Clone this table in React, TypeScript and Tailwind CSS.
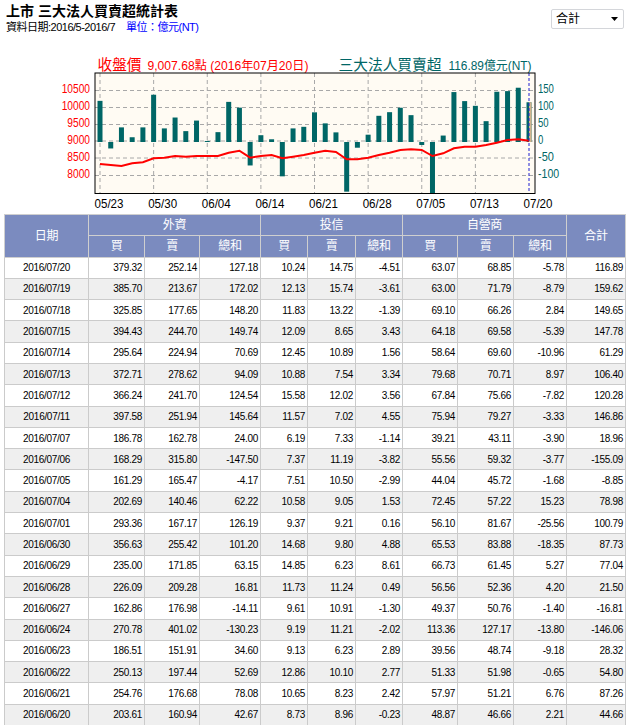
import React from "react"

// 三大法人買賣超統計表：上方為走勢圖，下方為逐日明細
const ROWS: string[][] = [
  ["2016/07/20", "379.32", "252.14", "127.18", "10.24", "14.75", "-4.51", "63.07", "68.85", "-5.78", "116.89"],
  ["2016/07/19", "385.70", "213.67", "172.02", "12.13", "15.74", "-3.61", "63.00", "71.79", "-8.79", "159.62"],
  ["2016/07/18", "325.85", "177.65", "148.20", "11.83", "13.22", "-1.39", "69.10", "66.26", "2.84", "149.65"],
  ["2016/07/15", "394.43", "244.70", "149.74", "12.09", "8.65", "3.43", "64.18", "69.58", "-5.39", "147.78"],
  ["2016/07/14", "295.64", "224.94", "70.69", "12.45", "10.89", "1.56", "58.64", "69.60", "-10.96", "61.29"],
  ["2016/07/13", "372.71", "278.62", "94.09", "10.88", "7.54", "3.34", "79.68", "70.71", "8.97", "106.40"],
  ["2016/07/12", "366.24", "241.70", "124.54", "15.58", "12.02", "3.56", "67.84", "75.66", "-7.82", "120.28"],
  ["2016/07/11", "397.58", "251.94", "145.64", "11.57", "7.02", "4.55", "75.94", "79.27", "-3.33", "146.86"],
  ["2016/07/07", "186.78", "162.78", "24.00", "6.19", "7.33", "-1.14", "39.21", "43.11", "-3.90", "18.96"],
  ["2016/07/06", "168.29", "315.80", "-147.50", "7.37", "11.19", "-3.82", "55.56", "59.32", "-3.77", "-155.09"],
  ["2016/07/05", "161.29", "165.47", "-4.17", "7.51", "10.50", "-2.99", "44.04", "45.72", "-1.68", "-8.85"],
  ["2016/07/04", "202.69", "140.46", "62.22", "10.58", "9.05", "1.53", "72.45", "57.22", "15.23", "78.98"],
  ["2016/07/01", "293.36", "167.17", "126.19", "9.37", "9.21", "0.16", "56.10", "81.67", "-25.56", "100.79"],
  ["2016/06/30", "356.63", "255.42", "101.20", "14.68", "9.80", "4.88", "65.53", "83.88", "-18.35", "87.73"],
  ["2016/06/29", "235.00", "171.85", "63.15", "14.85", "6.23", "8.61", "66.73", "61.45", "5.27", "77.04"],
  ["2016/06/28", "226.09", "209.28", "16.81", "11.73", "11.24", "0.49", "56.56", "52.36", "4.20", "21.50"],
  ["2016/06/27", "162.86", "176.98", "-14.11", "9.61", "10.91", "-1.30", "49.37", "50.76", "-1.40", "-16.81"],
  ["2016/06/24", "270.78", "401.02", "-130.23", "9.19", "11.21", "-2.02", "113.36", "127.17", "-13.80", "-146.06"],
  ["2016/06/23", "186.51", "151.91", "34.60", "9.13", "6.23", "2.89", "39.56", "48.74", "-9.18", "28.32"],
  ["2016/06/22", "250.13", "197.44", "52.69", "12.86", "10.10", "2.77", "51.33", "51.98", "-0.65", "54.80"],
  ["2016/06/21", "254.76", "176.68", "78.08", "10.65", "8.23", "2.42", "57.97", "51.21", "6.76", "87.26"],
  ["2016/06/20", "203.61", "160.94", "42.67", "8.73", "8.96", "-0.23", "48.87", "46.66", "2.21", "44.66"],
]

// 05/23 ~ 06/17 由圖估計，之後取自表格合計
const EARLY = [121, -19, 43, 14, 43, 139, 40, 72, 32, 63, 3, 29, 118, 101, -69, 20, 8, -101, 40]
const BARS = [...EARLY, ...ROWS.map((r) => parseFloat(r[10])).reverse()]

const LINE_Y = [
  164, 165, 166, 163.3, 162.3, 158.3, 157.7, 156, 156.7, 156, 156, 156, 152.7, 150.7, 157.7, 156, 155, 158.3,
  156.7, 155, 152.7, 150.7, 152, 159.3, 159.3, 157.7, 155, 152.7, 150, 149.3, 150, 156, 153.3, 148.3, 146.7,
  146.7, 145, 142.7, 140, 139.3, 140.7,
]

const X0 = 100
const STEP = 10.725
const ZERO = 142
const K = 0.34
const LEFT = 95
const RIGHT = 535
const TOP = 73
const BOTTOM = 193.5

const GRID_Y = [90.5, 107.5, 124.5, 141, 158, 175.5]
const LABEL_Y = [92.5, 109.5, 126.5, 143.5, 160.5, 177.5]
const LEFT_LABELS = ["10500", "10000", "9500", "9000", "8500", "8000"]
const RIGHT_LABELS = ["150", "100", "50", "0", "-50", "-100"]
const DATES = ["05/23", "05/30", "06/04", "06/14", "06/21", "06/28", "07/05", "07/13", "07/20"]

const FONT = "'Liberation Sans','Noto Sans CJK TC',sans-serif"

function Chart() {
  const xAt = (i: number) => X0 + i * STEP
  return (
    <svg width={633} height={178} viewBox="0 36 633 178" className="block" style={{ fontFamily: FONT }}>
      <text x={97.5} y={69.5} fill="#ff0000" fontSize={15} textLength={44} lengthAdjust="spacingAndGlyphs">
        收盤價
      </text>
      <text x={147.5} y={69.5} fill="#ff0000" fontSize={12} textLength={161} lengthAdjust="spacingAndGlyphs">
        9,007.68點 (2016年07月20日)
      </text>
      <text x={338.5} y={69.5} fill="#006666" fontSize={15} textLength={103} lengthAdjust="spacingAndGlyphs">
        三大法人買賣超
      </text>
      <text x={448.5} y={69.5} fill="#006666" fontSize={12} textLength={83} lengthAdjust="spacingAndGlyphs">
        116.89億元(NT)
      </text>

      <rect x={LEFT} y={TOP} width={RIGHT - LEFT} height={BOTTOM - TOP} fill="#fffbf3" />
      <defs>
        <clipPath id="plot">
          <rect x={LEFT} y={TOP} width={RIGHT - LEFT} height={BOTTOM - TOP} />
        </clipPath>
      </defs>

      {GRID_Y.map((y) => (
        <line key={y} x1={LEFT} x2={RIGHT} y1={y} y2={y} stroke="#a8a8a8" strokeDasharray="4 3" />
      ))}
      {DATES.slice(0, 8).map((d, n) => (
        <line key={d} x1={xAt(n * 5)} x2={xAt(n * 5)} y1={TOP} y2={BOTTOM} stroke="#a8a8a8" strokeDasharray="4 3" />
      ))}

      <g clipPath="url(#plot)">
        {BARS.map((v, i) => {
          const h = Math.abs(v) * K
          const y = v >= 0 ? ZERO - h : ZERO
          return <rect key={i} x={xAt(i) - 2.5} y={y} width={5} height={h} fill="#006666" />
        })}
        <rect x={xAt(40)} y={ZERO - 116.89 * K} width={2.5} height={116.89 * K} fill="#d2b48c" />
        <polyline
          points={LINE_Y.map((y, i) => `${xAt(i)},${y}`).join(" ")}
          fill="none"
          stroke="#ff0000"
          strokeWidth={2}
        />
      </g>
      <line x1={529} x2={529} y1={TOP} y2={BOTTOM} stroke="#2020d0" strokeDasharray="3 2" />

      <rect x={LEFT} y={TOP} width={RIGHT - LEFT} height={BOTTOM - TOP} fill="none" stroke="#000" />

      {LEFT_LABELS.map((t, n) => (
        <text
          key={t}
          x={90}
          y={LABEL_Y[n]}
          fill="#ff0000"
          fontSize={13}
          textAnchor="end"
          textLength={t.length * 5.67}
          lengthAdjust="spacingAndGlyphs"
        >
          {t}
        </text>
      ))}
      {RIGHT_LABELS.map((t, n) => (
        <text
          key={t}
          x={538}
          y={LABEL_Y[n]}
          fill="#006666"
          fontSize={13}
          textLength={t.length * 5.3}
          lengthAdjust="spacingAndGlyphs"
        >
          {t}
        </text>
      ))}
      {DATES.map((d, n) => (
        <text key={d} x={xAt(n * 5) - 5.5} y={208} fill="#000" fontSize={13} textLength={29} lengthAdjust="spacingAndGlyphs">
          {d}
        </text>
      ))}
    </svg>
  )
}

const COLS = [84, 56, 55, 61, 47, 48, 47, 55, 56, 53, 59]

export default function App() {
  const th = "border border-[#cfcfcf] bg-[#7b8bbf] text-white font-normal text-[12px] p-0"
  const td = "border border-[#cbcbcb] p-0 pr-[2px] text-right"
  return (
    <div className="w-[633px] bg-white text-black font-['Liberation_Sans','Noto_Sans_CJK_TC',sans-serif]">
      <div className="flex h-[36px] justify-between">
        <div className="pl-[6px] pt-[4px]">
          <div className="text-[14px] font-bold leading-[15px]">上市 三大法人買賣超統計表</div>
          <div className="mt-[2px] text-[11px] leading-[13px] tracking-[-0.5px]">
            資料日期:2016/5-2016/7<span className="ml-[11px] text-[#0000ff]">單位：億元(NT)</span>
          </div>
        </div>
        <div className="mr-[9px] mt-[9px] flex h-[20px] w-[73px] items-center justify-between rounded-[2px] border border-[#d4d6da] pl-[4px] pr-[5px] text-[12px]">
          <span>合計</span>
          <svg width="7" height="4" viewBox="0 0 7 4">
            <path d="M0 0h7L3.5 4z" fill="#000" />
          </svg>
        </div>
      </div>

      <Chart />

      <table className="ml-[4px] table-fixed border-collapse text-[10px] tracking-[-0.3px]">
        <colgroup>
          {COLS.map((w, i) => (
            <col key={i} style={{ width: w }} />
          ))}
        </colgroup>
        <thead>
          <tr className="h-[20.5px]">
            <th rowSpan={2} className={th}>日期</th>
            <th colSpan={3} className={th}>外資</th>
            <th colSpan={3} className={th}>投信</th>
            <th colSpan={3} className={th}>自營商</th>
            <th rowSpan={2} className={th}>合計</th>
          </tr>
          <tr className="h-[22px]">
            {["買", "賣", "總和", "買", "賣", "總和", "買", "賣", "總和"].map((t, i) => (
              <th key={i} className={th}>{t}</th>
            ))}
          </tr>
        </thead>
        <tbody>
          {ROWS.map((r, idx) => (
            <tr key={r[0]} className={idx % 2 === 0 ? "h-[21.3px] bg-white" : "h-[21.3px] bg-[#efefef]"}>
              <td className="border border-[#cbcbcb] p-0 text-center">{r[0]}</td>
              {r.slice(1).map((v, i) => (
                <td key={i} className={td}>{v}</td>
              ))}
            </tr>
          ))}
        </tbody>
      </table>
    </div>
  )
}
